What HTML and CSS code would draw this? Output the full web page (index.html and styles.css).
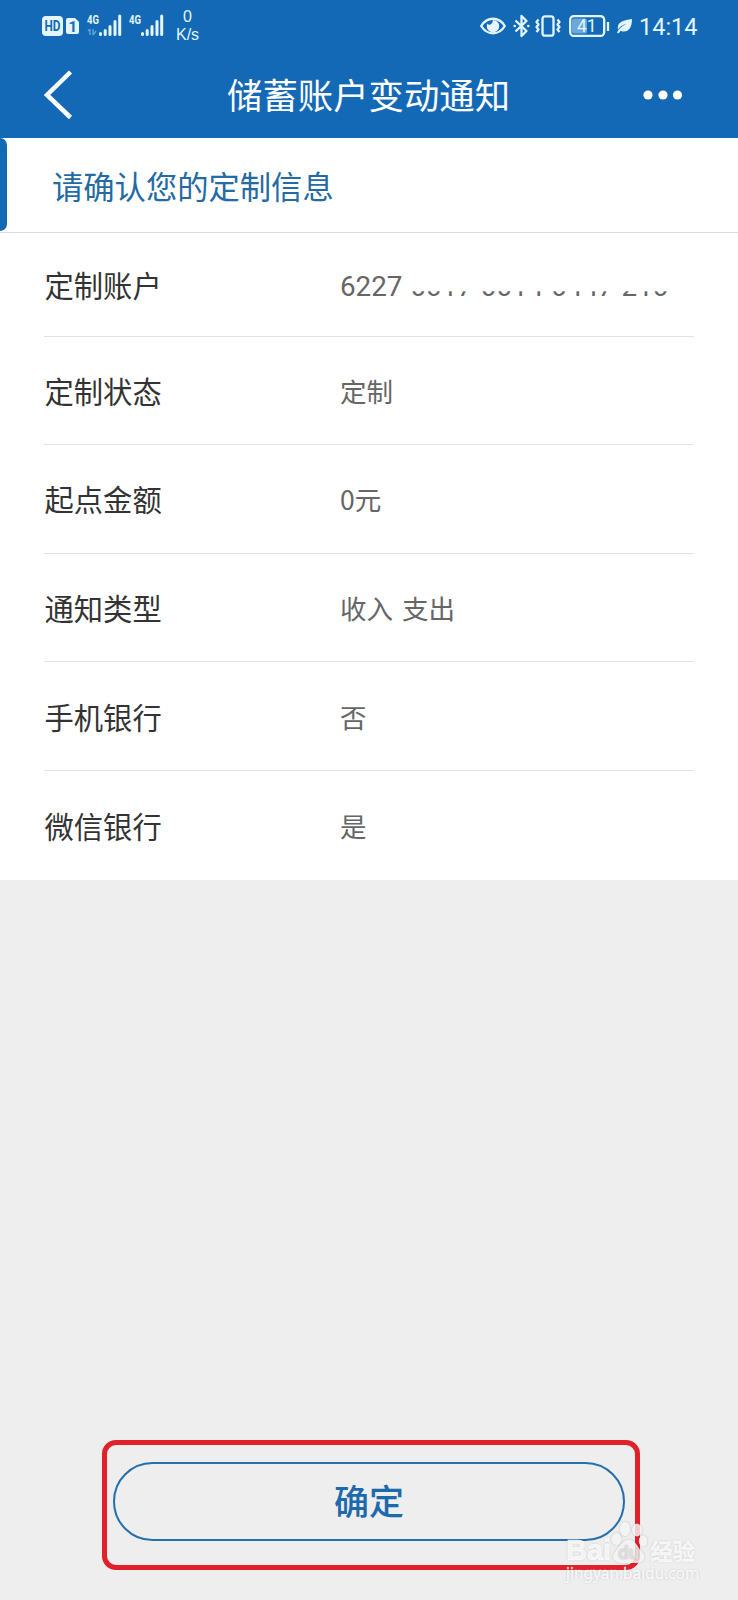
FILE: index.html
```html
<!DOCTYPE html>
<html lang="zh-CN">
<head>
  <meta charset="UTF-8">
  <meta name="viewport" content="width=device-width, initial-scale=1.0">
  <title>储蓄账户变动通知</title>
  <link rel="stylesheet" href="styles.css">
</head>
<body>
  <div class="screen">
    <header class="header">
      <div class="status-bar">
        <div class="status-left">
          <svg class="icon-hd" width="38" height="22" viewBox="0 0 38 22">
            <rect x="0" y="1" width="21" height="20" rx="4"/>
            <path d="M26 3h7l4 4v10a2 2 0 0 1-2 2h-9a2 2 0 0 1-2-2V5a2 2 0 0 1 2-2z"/>
            <text class="cut" x="2.5" y="16" font-size="14" font-weight="700" textLength="16" lengthAdjust="spacingAndGlyphs">HD</text>
            <text class="cut" x="26.5" y="16.5" font-size="15" font-weight="700">1</text>
          </svg>
          <svg class="icon-signal" width="36" height="24" viewBox="0 0 36 24">
            <text x="0" y="11" font-size="12" font-weight="700" textLength="12" lengthAdjust="spacingAndGlyphs">4G</text>
            <path class="dim" d="M3 16v6M1 18l2-2M6 16v6M6 22l3-4"/>
            <path class="bars" d="M13.5 20.5v1M18.2 17.5v4M23 13.5v8M28 8.5v13M32.7 3v18.5"/>
          </svg>
          <svg class="icon-signal" width="36" height="24" viewBox="0 0 36 24">
            <text x="0" y="11" font-size="12" font-weight="700" textLength="12" lengthAdjust="spacingAndGlyphs">4G</text>
            <path class="bars" d="M13.5 20.5v1M18.2 17.5v4M23 13.5v8M28 8.5v13M32.7 3v18.5"/>
          </svg>
          <div class="net-speed"><span>0</span><span>K/s</span></div>
        </div>
        <div class="status-right">
          <svg class="icon-eye" width="26" height="18" viewBox="0 0 26 18">
            <path class="line" d="M1.2 9C7-.7 19-.7 24.8 9 19 18.7 7 18.7 1.2 9z"/>
            <path d="M13 3a6.2 6.2 0 1 1-6.2 6.2c0-1 .3-2 .7-2.800 1 2.200 4.800 2 5.500-3.400z"/>
          </svg>
          <svg class="icon-bluetooth" width="17" height="24" viewBox="0 0 17 24">
            <path class="line" d="M2.5 6.500l11 10.500-5 5V2l5 5-11 10.500"/>
            <circle cx="1.7" cy="12" r="1.3"/>
            <circle cx="15.3" cy="12" r="1.3"/>
          </svg>
          <svg class="icon-vibrate" width="26" height="22" viewBox="0 0 26 22">
            <rect class="line" x="7.5" y="1.3" width="11" height="19.4" rx="2.5"/>
            <path class="line" d="M3.5 4.5L1.5 7l2 2.500-2 2.500 2 2.500-2 2.500M22.500 4.500l2 2.500-2 2.500 2 2.500-2 2.500 2 2.500"/>
          </svg>
          <svg class="icon-battery" width="41" height="22" viewBox="0 0 41 22">
            <rect class="dim-fill" x="3" y="3.5" width="15" height="15" rx="2"/>
            <rect class="line" x="1.2" y="1" width="34" height="20" rx="4"/>
            <path class="line" d="M39 7v9"/>
            <text x="8" y="17.3" font-size="17.5">41</text>
          </svg>
          <svg class="icon-leaf" width="15" height="16" viewBox="0 0 15 16">
            <path d="M15 1c0 8-3 13-9 12.500-1 0-1.800-.3-2.400-.7L1.500 15.500 0 14.500C2 10.500 5 8 9.500 6 5.500 6.800 3 8.500 1 11.500-.5 4.500 6 2 15 1z"/>
          </svg>
          <span class="clock">14:14</span>
        </div>
      </div>
      <div class="nav-bar">
        <svg class="icon-back" width="30" height="50" viewBox="0 0 30 50">
          <path d="M27.5 2L4 25l23.500 22.500"/>
        </svg>
        <h1 class="nav-title">储蓄账户变动通知</h1>
        <svg class="icon-more" width="40" height="10" viewBox="0 0 40 10">
          <circle cx="5" cy="5" r="4.6"/>
          <circle cx="20" cy="5" r="4.6"/>
          <circle cx="34.5" cy="5" r="4.6"/>
        </svg>
      </div>
    </header>

    <main>
      <h2 class="section-title">请确认您的定制信息</h2>
      <div class="info-list">
        <div class="info-row first">
          <span class="label">定制账户</span>
          <span class="value">6227 <span class="masked">0017 0014 0447 210</span></span>
        </div>
        <div class="info-row">
          <span class="label">定制状态</span>
          <span class="value">定制</span>
        </div>
        <div class="info-row">
          <span class="label">起点金额</span>
          <span class="value">0元</span>
        </div>
        <div class="info-row">
          <span class="label">通知类型</span>
          <span class="value">收入 支出</span>
        </div>
        <div class="info-row">
          <span class="label">手机银行</span>
          <span class="value">否</span>
        </div>
        <div class="info-row">
          <span class="label">微信银行</span>
          <span class="value">是</span>
        </div>
      </div>
    </main>

    <footer class="footer">
      <div class="highlight">
        <button class="confirm">确定</button>
      </div>
    </footer>

    <div class="watermark">
      <div class="wm-brand">
        <span class="wm-bai">Bai</span>
        <svg class="wm-paw" width="36" height="44" viewBox="0 0 36 44">
          <ellipse cx="5.5" cy="18" rx="4.8" ry="6"/>
          <ellipse cx="14" cy="8" rx="5" ry="7"/>
          <ellipse cx="26" cy="9" rx="4.8" ry="6.5"/>
          <ellipse cx="32" cy="20" rx="4.2" ry="5.5"/>
          <path d="M18 19c7 0 9 8 13 12 5 6 1 11-5 11-5 0-11 0-15 0-8 0-11-6-7-11 4-4 7-12 14-12z"/>
          <text class="wm-du" x="7" y="38" font-size="19">du</text>
        </svg>
        <span class="wm-cn">经验</span>
      </div>
      <div class="wm-url">jingyan.baidu.com</div>
    </div>
  </div>
</body>
</html>
```

FILE: styles.css
```css
* {
  box-sizing: border-box;
}
body {
  margin: 0;
  font-family: Roboto, "Noto Sans CJK SC", sans-serif;
  background-color: #eeeeee;
}
.screen {
  position: relative;
  display: flex;
  flex-direction: column;
  height: 1600px;
  overflow: hidden;
}

/* header */
.header {
  height: 138px;
  background-color: #1469b6;
  color: #fff;
}
.status-bar {
  display: flex;
  justify-content: space-between;
  height: 52px;
  padding: 0 42px;
}
.status-bar svg {
  fill: #e3f6ff;
}
.status-bar .cut {
  fill: #1469b6;
}
.status-bar .line {
  fill: none;
  stroke: #e3f6ff;
  stroke-width: 2.3;
  stroke-linejoin: round;
}
.status-bar .bars {
  stroke: #e3f6ff;
  stroke-width: 3;
  stroke-linecap: round;
}
.status-bar .dim {
  fill: none;
  stroke: #5c9fd8;
  stroke-width: 1.5;
}
.status-bar .dim-fill {
  fill: #6ba8dc;
}
.status-left,
.status-right {
  display: flex;
  align-items: center;
}
.icon-signal {
  margin: -3px 0 0 7px;
}
.icon-signal + .icon-signal {
  margin-left: 6px;
}
.net-speed {
  display: flex;
  flex-direction: column;
  align-items: center;
  margin-left: 11px;
  font-family: "Liberation Sans", Arial, sans-serif;
  font-size: 16px;
  line-height: 18px;
  color: #e3f6ff;
}
.status-right {
  gap: 7px;
}
.icon-vibrate {
  margin-left: -2px;
}
.icon-battery {
  margin-left: 1px;
}
.clock {
  width: 57px;
  padding-top: 2px;
  font-size: 23.5px;
  line-height: 26px;
  color: #e3f6ff;
}
.nav-bar {
  display: flex;
  align-items: center;
  height: 86px;
  padding: 0 55px 0 43px;
}
.icon-back {
  fill: none;
  stroke: #fff;
  stroke-width: 4.5;
}
.icon-more {
  margin-left: auto;
  fill: #fff;
}
.nav-title {
  margin: -3px 0 0 154px;
  font-size: 35.4px;
  font-weight: 400;
}

/* info */
.section-title {
  position: relative;
  height: 95px;
  margin: 0;
  padding-left: 52px;
  border-bottom: 1px solid #dcdfe2;
  background-color: #fff;
  font-size: 31.3px;
  font-weight: 400;
  line-height: 101px;
  color: #246aa5;
}
.section-title::before {
  content: "";
  position: absolute;
  left: 0;
  top: 0;
  width: 7px;
  height: 93px;
  border-radius: 0 7px 7px 0;
  background-color: #1469b6;
}
.info-list {
  padding: 0 44px;
  background-color: #fff;
}
.info-row {
  display: flex;
  align-items: center;
  height: 108.6px;
  border-bottom: 1px solid #e2e2e2;
}
.info-row.first {
  height: 103.6px;
}
.info-row:last-child {
  border-bottom: none;
}
.label {
  width: 296px;
  padding: 0 0 1px 0.5px;
  font-size: 29.3px;
  color: #333;
}
.value {
  font-family: "Noto Sans CJK SC", sans-serif;
  font-size: 26.5px;
  word-spacing: 3px;
  color: #666;
}
.first .value {
  padding-top: 5px;
  font-family: Roboto, sans-serif;
  font-size: 27.8px;
  word-spacing: 1px;
  white-space: nowrap;
}
/* only the foot of the hidden digits stays visible */
.masked {
  display: inline-block;
  clip-path: inset(21px 0 0 0);
}

/* footer */
.footer {
  margin-top: auto;
  padding: 0 98px 30px 102px;
}
.highlight {
  height: 130px;
  padding: 17px 10px 0 6px;
  border: 5px solid #e12129;
  border-radius: 14px;
}
.confirm {
  display: block;
  width: 100%;
  height: 79px;
  padding: 0 0 4px;
  border: 2px solid #246fac;
  border-radius: 40px;
  background: none;
  font-family: "Noto Sans CJK SC", sans-serif;
  font-size: 35px;
  font-weight: 500;
  color: #1c69ad;
}

/* watermark */
.watermark {
  position: absolute;
  left: 566px;
  top: 1521px;
  color: rgba(255, 255, 255, 0.85);
  text-shadow: 0 0 2px rgba(0, 0, 0, 0.25);
}
.wm-brand {
  display: flex;
  align-items: flex-end;
  height: 44px;
}
.wm-bai {
  font-family: "Liberation Sans", Arial, sans-serif;
  font-size: 29px;
  font-weight: 700;
  line-height: 30px;
  -webkit-text-stroke: 0.6px #fff;
}
.wm-paw {
  fill: rgba(255, 255, 255, 0.8);
  filter: drop-shadow(0 0 1px rgba(0, 0, 0, 0.25));
}
.wm-du {
  fill: #dedede;
  font-weight: 500;
}
.wm-cn {
  margin-left: 3px;
  font-size: 22.5px;
  font-weight: 700;
  line-height: 26px;
  -webkit-text-stroke: 0.4px #fff;
}
.wm-url {
  font-family: "Noto Sans", sans-serif;
  font-size: 15.4px;
  line-height: 18px;
  -webkit-text-stroke: 0.3px #fff;
}
```
